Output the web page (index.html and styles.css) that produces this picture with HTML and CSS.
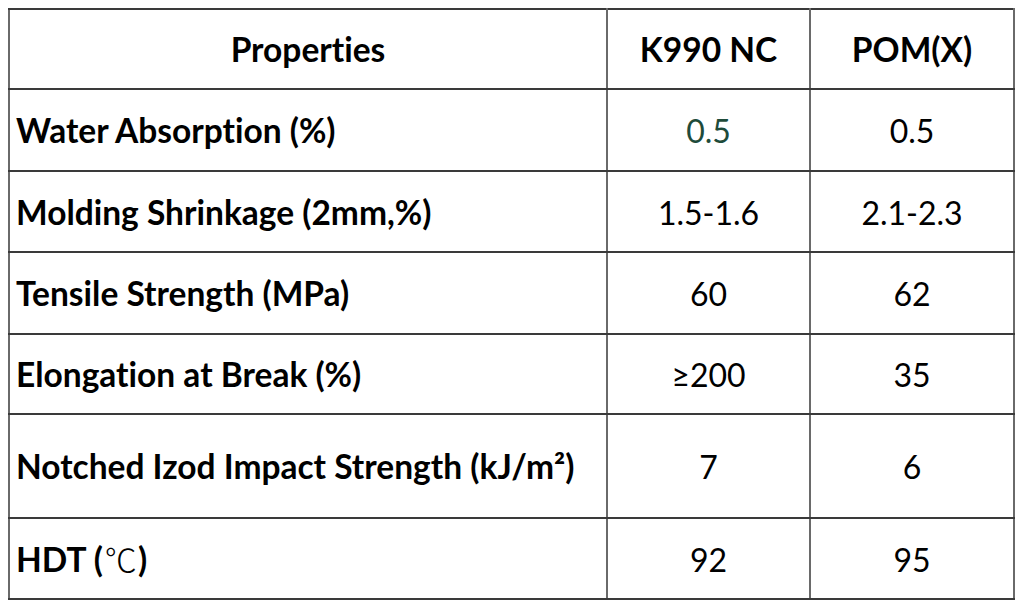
FILE: index.html
```html
<!DOCTYPE html>
<html lang="en">
<head>
<meta charset="utf-8">
<title>K990 NC vs POM(X)</title>
<link rel="stylesheet" href="styles.css">
</head>
<body>
<table class="props">
  <colgroup>
    <col class="c-name">
    <col class="c-val">
    <col class="c-val2">
  </colgroup>
  <thead>
    <tr class="r-head">
      <th class="head-name">Properties</th>
      <th>K990 NC</th>
      <th>POM(X)</th>
    </tr>
  </thead>
  <tbody>
    <tr class="r1">
      <th class="name">Water Absorption (%)</th>
      <td class="green">0.5</td>
      <td>0.5</td>
    </tr>
    <tr class="r2">
      <th class="name">Molding Shrinkage (2mm,%)</th>
      <td>1.5-1.6</td>
      <td>2.1-2.3</td>
    </tr>
    <tr class="r3">
      <th class="name">Tensile Strength (MPa)</th>
      <td>60</td>
      <td>62</td>
    </tr>
    <tr class="r4">
      <th class="name">Elongation at Break (%)</th>
      <td>≥200</td>
      <td>35</td>
    </tr>
    <tr class="r5">
      <th class="name">Notched Izod Impact Strength (kJ/m²)</th>
      <td>7</td>
      <td>6</td>
    </tr>
    <tr class="r6">
      <th class="name">HDT (<span class="cjk">℃</span>)</th>
      <td>92</td>
      <td>95</td>
    </tr>
  </tbody>
</table>
</body>
</html>
```

FILE: styles.css
```css
html, body {
  margin: 0;
  padding: 0;
  background: #ffffff;
}

body {
  padding: 8px 0 0 8px;
  font-family: Lato, "Open Sans", "Liberation Sans", sans-serif;
  color: #000;
  font-variant-ligatures: none;
  font-feature-settings: "liga" 0, "clig" 0, "dlig" 0;
}

.props {
  border-collapse: collapse;
  table-layout: fixed;
  width: 1007px;
  border: 2px solid #2a2a2a;
}

.c-name { width: 598px; }
.c-val { width: 203px; }
.c-val2 { width: 204px; }

.props th,
.props td {
  border-top: 2px solid #3a3a3a;
  border-bottom: 2px solid #3a3a3a;
  border-left: 2px solid #6a6a6a;
  border-right: 2px solid #6a6a6a;
  padding: 0;
  text-align: center;
  vertical-align: middle;
  line-height: 1;
}

.props th {
  font-weight: 700;
  font-size: 33.5px;
  padding-top: 2px;
}

.props td {
  font-weight: 400;
  font-size: 32px;
  padding-top: 2px;
}

.props .name {
  text-align: left;
  padding-left: 6px;
}

.cjk {
  font-family: "Noto Sans CJK SC", sans-serif;
  font-weight: 200;
  font-size: 32px;
  margin: 0 1px 0 2px;
}

.green {
  color: #1e4b3a;
}

.r-head { height: 80px; }
.r1 { height: 82px; }
.r2 { height: 81px; }
.r3 { height: 82px; }
.r4 { height: 80px; }
.r5 { height: 104px; }
.r6 { height: 81px; }
```
